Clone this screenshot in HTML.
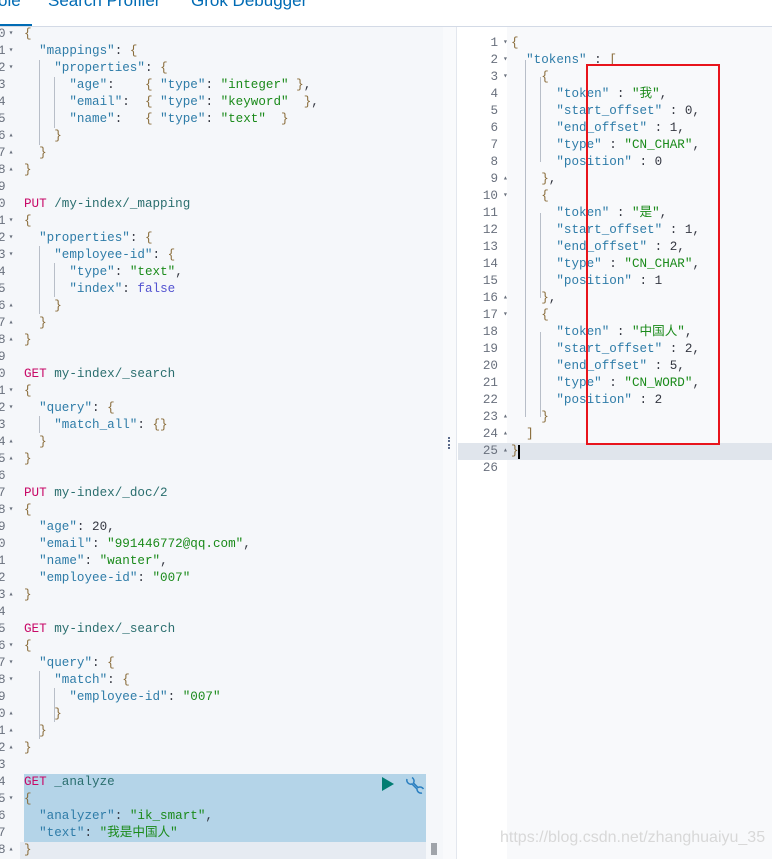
<!DOCTYPE html>
<html><head><meta charset="utf-8"><style>
*{margin:0;padding:0;box-sizing:border-box}
body{width:772px;height:859px;overflow:hidden;background:#fff;position:relative;font-family:"Liberation Mono","Noto Sans CJK SC",monospace;font-size:12.6px}
.tabs{position:absolute;left:0;top:0;width:772px;height:27px;background:#fff;border-bottom:1px solid #d3dae6;font-family:"Liberation Sans",sans-serif;font-size:17px;color:#006bb4}
.tabs span{position:absolute;top:-9px}
.ul{position:absolute;left:0;top:24px;width:32px;height:2px;background:#006bb4}
.lp{position:absolute;left:0;top:27px;width:443px;height:832px;background:#f5f7fa;overflow:hidden}
.mid{position:absolute;left:443px;top:27px;width:14px;height:832px;background:#f9fafc;border-right:1px solid #e3e7ee}
.rp{position:absolute;left:458px;top:27px;width:314px;height:832px;background:#f8f9fb;overflow:hidden}
.rg{position:absolute;left:0;top:0;width:49px;height:832px;background:#fff}
.l{position:absolute;height:17px;line-height:17px;white-space:pre;color:#343741}
.n{position:absolute;height:17px;line-height:17px;color:#69707d;white-space:pre}
.k{color:#2e7ca8}.s{color:#1a8a1a}.m{color:#c80a68}.p{color:#2a6e6e}.b{color:#8a6d3b}.f{color:#5252d0}
.sel{position:absolute;left:24px;top:747px;width:402px;height:68px;background:#b4d4e8}
.act{position:absolute;left:20px;top:815px;width:406px;height:17px;background:#e6ebf2}
.ra{position:absolute;left:0;top:416px;width:314px;height:17px;background:#e0e5ec}
.g{position:absolute;width:1px;background:#b8bec8}
</style></head><body>
<div class="tabs"><span style="left:-2px">ole</span><span style="left:48px">Search Profiler</span><span style="left:191px">Grok Debugger</span><div class="ul"></div></div>
<div class="lp">
<div class="sel"></div><div class="act"></div>
<div class="g" style="left:39px;top:33px;height:85px"></div>
<div class="g" style="left:54px;top:50px;height:51px"></div>
<div class="g" style="left:39px;top:219px;height:68px"></div>
<div class="g" style="left:54px;top:236px;height:34px"></div>
<div class="g" style="left:39px;top:389px;height:17px"></div>
<div class="g" style="left:39px;top:644px;height:68px"></div>
<div class="g" style="left:54px;top:661px;height:34px"></div>
<div id="L"></div>
</div>
<div class="mid"><div style="position:absolute;left:5px;top:410px;width:2px;height:12px;border-left:2px dotted #5a6a8a"></div></div>
<div class="rp"><div class="rg"></div><div class="ra"></div>
<div class="g" style="left:67px;top:33px;height:357px"></div>
<div class="g" style="left:82px;top:50px;height:85px"></div>
<div class="g" style="left:82px;top:186px;height:85px"></div>
<div class="g" style="left:82px;top:305px;height:85px"></div>
<div id="R"></div>
<div style="position:absolute;left:60px;top:418px;width:2px;height:14px;background:#000"></div>
</div>
<div style="position:absolute;left:586px;top:64px;width:134px;height:381px;border:2px solid #e8141c"></div>
<svg style="position:absolute;left:381px;top:776px" width="14" height="16"><polygon points="1,1 13,8 1,15" fill="#017d73"/></svg>
<svg style="position:absolute;left:405px;top:776px" width="20" height="18" viewBox="0 0 20 18"><g fill="none" stroke="#2a7fc0" stroke-width="1.5"><path d="M2 3 A4 4 0 0 0 7 8 L12 13 A4 4 0 0 0 17 17 M7 1.5 A4 4 0 0 1 8.5 7 L13 11.5 A4 4 0 0 1 18.5 13"/></g></svg>
<div style="position:absolute;left:431px;top:843px;width:6px;height:12px;background:#a0a4aa"></div>
<div style="position:absolute;left:500px;top:829px;font-family:'Liberation Sans',sans-serif;font-size:16px;color:#d8d8d8">https://blog.csdn.net/zhanghuaiyu_35</div>
<script>
const Ls=[
['0','▾','<span class="b">{</span>'],
['1','▾','  <span class="k">"mappings"</span>: <span class="b">{</span>'],
['2','▾','    <span class="k">"properties"</span>: <span class="b">{</span>'],
['3','','      <span class="k">"age"</span>:    <span class="b">{</span> <span class="k">"type"</span>: <span class="s">"integer"</span> <span class="b">}</span>,'],
['4','','      <span class="k">"email"</span>:  <span class="b">{</span> <span class="k">"type"</span>: <span class="s">"keyword"</span>  <span class="b">}</span>,'],
['5','','      <span class="k">"name"</span>:   <span class="b">{</span> <span class="k">"type"</span>: <span class="s">"text"</span>  <span class="b">}</span>'],
['6','▴','    <span class="b">}</span>'],['7','▴','  <span class="b">}</span>'],['8','▴','<span class="b">}</span>'],['9','',''],
['0','','<span class="m">PUT</span> <span class="p">/my-index/_mapping</span>'],
['1','▾','<span class="b">{</span>'],
['2','▾','  <span class="k">"properties"</span>: <span class="b">{</span>'],
['3','▾','    <span class="k">"employee-id"</span>: <span class="b">{</span>'],
['4','','      <span class="k">"type"</span>: <span class="s">"text"</span>,'],
['5','','      <span class="k">"index"</span>: <span class="f">false</span>'],
['6','▴','    <span class="b">}</span>'],['7','▴','  <span class="b">}</span>'],['8','▴','<span class="b">}</span>'],['9','',''],
['0','','<span class="m">GET</span> <span class="p">my-index/_search</span>'],
['1','▾','<span class="b">{</span>'],
['2','▾','  <span class="k">"query"</span>: <span class="b">{</span>'],
['3','','    <span class="k">"match_all"</span>: <span class="b">{}</span>'],
['4','▴','  <span class="b">}</span>'],['5','▴','<span class="b">}</span>'],['6','',''],
['7','','<span class="m">PUT</span> <span class="p">my-index/_doc/2</span>'],
['8','▾','<span class="b">{</span>'],
['9','','  <span class="k">"age"</span>: 20,'],
['0','','  <span class="k">"email"</span>: <span class="s">"991446772@qq.com"</span>,'],
['1','','  <span class="k">"name"</span>: <span class="s">"wanter"</span>,'],
['2','','  <span class="k">"employee-id"</span>: <span class="s">"007"</span>'],
['3','▴','<span class="b">}</span>'],['4','',''],
['5','','<span class="m">GET</span> <span class="p">my-index/_search</span>'],
['6','▾','<span class="b">{</span>'],
['7','▾','  <span class="k">"query"</span>: <span class="b">{</span>'],
['8','▾','    <span class="k">"match"</span>: <span class="b">{</span>'],
['9','','      <span class="k">"employee-id"</span>: <span class="s">"007"</span>'],
['0','▴','    <span class="b">}</span>'],['1','▴','  <span class="b">}</span>'],['2','▴','<span class="b">}</span>'],['3','',''],
['4','','<span class="m">GET</span> <span class="p">_analyze</span>'],
['5','▾','<span class="b">{</span>'],
['6','','  <span class="k">"analyzer"</span>: <span class="s">"ik_smart"</span>,'],
['7','','  <span class="k">"text"</span>: <span class="s">"我是中国人"</span>'],
['8','▴','<span class="b">}</span>']];
let h='';Ls.forEach((a,i)=>{const t=i*17-1;h+=`<div class="n" style="left:-2px;top:${t}px">${a[0]}<span style="font-size:8px;position:relative;top:-2px;left:3px">${a[1]}</span></div><div class="l" style="left:24px;top:${t}px">${a[2]}</div>`});
document.getElementById('L').innerHTML=h;
const tok=(n,t,s,e,ty,p)=>[
['    <span class="b">{</span>','▾'],
[`      <span class="k">"token"</span> : <span class="s">"${t}"</span>,`,''],
[`      <span class="k">"start_offset"</span> : ${s},`,''],
[`      <span class="k">"end_offset"</span> : ${e},`,''],
[`      <span class="k">"type"</span> : <span class="s">"${ty}"</span>,`,''],
[`      <span class="k">"position"</span> : ${p}`,''],
['    <span class="b">}</span>'+(n?',':''),'▴']];
const R=[['<span class="b">{</span>','▾'],['  <span class="k">"tokens"</span> : <span class="b">[</span>','▾'],
...tok(1,'我',0,1,'CN_CHAR',0),...tok(1,'是',1,2,'CN_CHAR',1),...tok(0,'中国人',2,5,'CN_WORD',2),
['  <span class="b">]</span>','▴'],['<span class="b">}</span>','▴'],['','']];
h='';R.forEach((a,i)=>{const t=8+i*17;h+=`<div class="n" style="right:274px;top:${t}px;text-align:right">${i+1}</div><div class="n" style="left:45px;top:${t-1}px;font-size:8px">${a[1]}</div><div class="l" style="left:53px;top:${t}px">${a[0]}</div>`});
document.getElementById('R').innerHTML=h;
</script>
</body></html>
